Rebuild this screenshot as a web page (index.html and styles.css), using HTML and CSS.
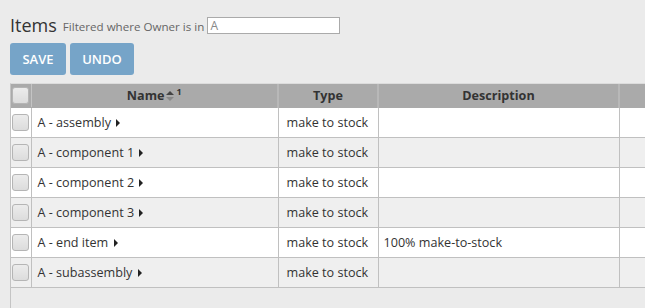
FILE: index.html
```html
<!DOCTYPE html>
<html>
<head>
<meta charset="utf-8">
<link rel="stylesheet" href="styles.css">
</head>
<body>
<div class="page">
  <div class="titlebar">
    <span class="title">Items</span>
    <span class="filter">Filtered where Owner is in</span>
    <input class="filter-input" type="text" value="A">
  </div>
  <div class="actions">
    <button class="btn">SAVE</button>
    <button class="btn btn-undo">UNDO</button>
  </div>
  <div class="grid">
    <table class="tbl">
      <colgroup>
        <col class="c-chk"><col class="c-name"><col class="c-type"><col class="c-desc"><col class="c-extra">
      </colgroup>
      <thead>
        <tr>
          <th class="chk"><span class="box"></span></th>
          <th>Name<svg class="sort" width="8" height="10" viewBox="0 0 8 10"><path d="M0 4 L4 0 L8 4 Z" fill="#444"/><path d="M0 6 L4 10 L8 6 Z" fill="#888"/></svg><sup class="sup">1</sup></th>
          <th>Type</th>
          <th>Description</th>
          <th></th>
        </tr>
      </thead>
      <tbody>
        <tr><td class="chk"><span class="box"></span></td><td class="name">A - assembly <span class="tri"></span></td><td class="type">make to stock</td><td></td><td></td></tr>
        <tr><td class="chk"><span class="box"></span></td><td class="name">A - component 1 <span class="tri"></span></td><td class="type">make to stock</td><td></td><td></td></tr>
        <tr><td class="chk"><span class="box"></span></td><td class="name">A - component 2 <span class="tri"></span></td><td class="type">make to stock</td><td></td><td></td></tr>
        <tr><td class="chk"><span class="box"></span></td><td class="name">A - component 3 <span class="tri"></span></td><td class="type">make to stock</td><td></td><td></td></tr>
        <tr><td class="chk"><span class="box"></span></td><td class="name">A - end item <span class="tri"></span></td><td class="type">make to stock</td><td>100% make-to-stock</td><td></td></tr>
        <tr><td class="chk"><span class="box"></span></td><td class="name">A - subassembly <span class="tri"></span></td><td class="type">make to stock</td><td></td><td></td></tr>
      </tbody>
    </table>
  </div>
</div>
</body>
</html>
```

FILE: styles.css
```css
html, body {
  margin: 0;
  padding: 0;
  background: #ebebeb;
  overflow: hidden;
}
body {
  font-family: "Open Sans", "Liberation Sans", sans-serif;
  color: #333;
}
.page {
  padding: 13px 0 0 10px;
}
.titlebar {
  display: flex;
  align-items: center;
  height: 22px;
}
.title {
  font-size: 18px;
  color: #333;
  line-height: 22px;
  margin-top: 1px;
}
.filter {
  font-size: 11.6px;
  color: #666;
  margin-left: 6px;
  margin-top: 4px;
}
.filter-input {
  margin: 2px 0 0 3px;
  width: 133px;
  height: 17px;
  box-sizing: border-box;
  border: 1px solid #aaa;
  background: #fff;
  font-family: "Open Sans", "Liberation Sans", sans-serif;
  font-size: 12px;
  color: #888;
  padding: 0 2px;
  outline: none;
}
.actions {
  display: flex;
  gap: 4px;
  margin-top: 8px;
}
.btn {
  height: 32px;
  width: 56px;
  border: none;
  border-radius: 3px;
  background: #76a4c8;
  color: #fff;
  font-family: "Open Sans", "Liberation Sans", sans-serif;
  font-weight: 600;
  font-size: 13px;
  padding: 0;
  cursor: pointer;
}
.btn-undo {
  width: 64px;
}
.grid {
  margin-top: 8px;
  height: 240px;
  border-left: 1px solid #c4c4c4;
  border-top: 1px solid #dcdcdc;
  overflow: hidden;
  background: #ebebeb;
}
.tbl {
  border-collapse: collapse;
  table-layout: fixed;
  width: 679px;
  font-size: 12.6px;
}
.c-chk { width: 20px; }
.c-name { width: 247px; }
.c-type { width: 100px; }
.c-desc { width: 241px; }
.c-extra { width: 71px; }
.tbl th {
  background: #aaaaaa;
  height: 23px;
  padding: 0;
  font-weight: 700;
  color: #333;
  border-right: 2px solid #b8b8b8;
  border-bottom: 1px solid #aaa;
  text-align: center;
  font-size: 12.6px;
  white-space: nowrap;
}
.tbl th.chk {
  border-right: 1px solid #c4c4c4;
}
.tbl td {
  height: 29px;
  padding: 0 5px;
  border-right: 1px solid #c0c0c0;
  border-bottom: 1px solid #c0c0c0;
  white-space: nowrap;
  overflow: hidden;
}
.tbl tbody tr:nth-child(odd) td { background: #fff; }
.tbl tbody tr:nth-child(even) td { background: #efefef; }
.tbl td.chk, .tbl th.chk {
  padding: 0 0 0 1px;
  text-align: left;
}
.tbl td.name { padding-left: 6px; }
.tbl td.type { padding-left: 8px; }
.box {
  display: block;
  width: 15px;
  height: 15px;
  border: 1px solid #b5b5b5;
  border-radius: 3px;
  background: linear-gradient(#ececec, #dcdcdc);
  margin-left: 0;
}
.tri {
  display: inline-block;
  width: 0;
  height: 0;
  border-top: 4px solid transparent;
  border-bottom: 4px solid transparent;
  border-left: 4px solid #222;
  margin-left: 2px;
  vertical-align: 0px;
}
.sort {
  vertical-align: -1px;
  margin-left: 1px;
}
.sup {
  font-size: 9px;
  margin-left: 3px;
  vertical-align: 5px;
  line-height: 0;
}
```
